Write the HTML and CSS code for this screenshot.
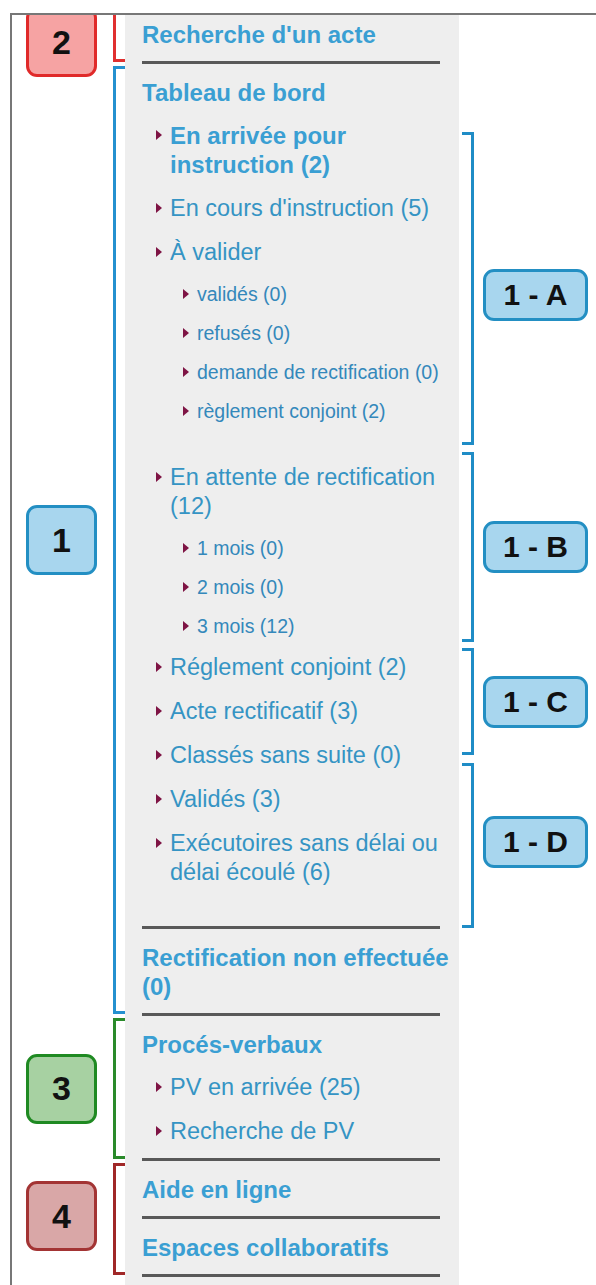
FILE: index.html
```html
<!DOCTYPE html>
<html lang="fr">
<head>
    <meta charset="UTF-8">
    <title>Menu - zones</title>
    <link rel="stylesheet" href="styles.css">
</head>
<body>

<div class="frame">

    <!-- zone 2 : recherche -->
    <div class="section sec-2">
        <div class="tag"><span class="badge badge-red">2</span></div>
        <div class="bracket bracket-red"></div>
        <div class="panel">
            <a class="head" href="#">Recherche d'un acte</a>
            <hr class="sep">
        </div>
    </div>

    <!-- zone 1 : tableau de bord -->
    <div class="section sec-1">
        <div class="tag"><span class="badge badge-blue">1</span></div>
        <div class="bracket bracket-blue"></div>
        <div class="panel">
            <a class="head" href="#">Tableau de bord</a>
            <ul class="menu menu-main">
                <li class="active"><a href="#">En arrivée pour instruction (2)</a></li>
                <li><a href="#">En cours d'instruction (5)</a></li>
                <li><a href="#">À valider</a>
                    <ul class="submenu">
                        <li><a href="#">validés (0)</a></li>
                        <li><a href="#">refusés (0)</a></li>
                        <li><a href="#">demande de rectification (0)</a></li>
                        <li><a href="#">règlement conjoint (2)</a></li>
                    </ul>
                </li>
                <li class="spaced"><a href="#">En attente de rectification (12)</a>
                    <ul class="submenu">
                        <li><a href="#">1 mois (0)</a></li>
                        <li><a href="#">2 mois (0)</a></li>
                        <li><a href="#">3 mois (12)</a></li>
                    </ul>
                </li>
                <li><a href="#">Réglement conjoint (2)</a></li>
                <li><a href="#">Acte rectificatif (3)</a></li>
                <li><a href="#">Classés sans suite (0)</a></li>
                <li><a href="#">Validés (3)</a></li>
                <li><a href="#">Exécutoires sans délai ou délai écoulé (6)</a></li>
            </ul>
            <hr class="sep">
            <a class="head" href="#">Rectification non effectuée (0)</a>
            <hr class="sep">
        </div>
        <div class="notes">
            <div class="note note-a"><span class="rbracket"></span><span class="badge badge-wide">1 - A</span></div>
            <div class="note note-b"><span class="rbracket"></span><span class="badge badge-wide">1 - B</span></div>
            <div class="note note-c"><span class="rbracket"></span><span class="badge badge-wide">1 - C</span></div>
            <div class="note note-d"><span class="rbracket"></span><span class="badge badge-wide">1 - D</span></div>
        </div>
    </div>

    <!-- zone 3 : proces-verbaux -->
    <div class="section sec-3">
        <div class="tag"><span class="badge badge-green">3</span></div>
        <div class="bracket bracket-green"></div>
        <div class="panel">
            <a class="head" href="#">Procés-verbaux</a>
            <ul class="menu">
                <li><a href="#">PV en arrivée (25)</a></li>
                <li><a href="#">Recherche de PV</a></li>
            </ul>
            <hr class="sep">
        </div>
    </div>

    <!-- zone 4 : aide -->
    <div class="section sec-4">
        <div class="tag"><span class="badge badge-brown">4</span></div>
        <div class="bracket bracket-brown"></div>
        <div class="panel">
            <a class="head" href="#">Aide en ligne</a>
            <hr class="sep">
            <a class="head" href="#">Espaces collaboratifs</a>
            <hr class="sep">
        </div>
    </div>

    <div class="tail"></div>
</div>

</body>
</html>
```

FILE: styles.css
```css
body {
    margin: 0;
    background-color: #ffffff;
    font-family: 'Liberation Sans', Arial, Helvetica, sans-serif;
}
.frame {
    margin: 13px 0 0 10px;
    border-top: 2px solid #777;
    border-left: 2px solid #777;
    overflow: hidden;
}
.section {
    display: flex;
}
.tag {
    width: 101px;
    flex: none;
    display: flex;
    align-items: center;
}
.badge {
    display: flex;
    align-items: center;
    justify-content: center;
    box-sizing: border-box;
    border: 3px solid;
    border-radius: 11px;
    font-weight: bold;
    color: #111;
}
.tag .badge {
    width: 71px;
    height: 70px;
    margin-left: 14px;
    font-size: 34px;
}
.sec-2 .tag {
    align-items: flex-start;
}
.sec-2 .tag .badge {
    margin-top: -8px;
    margin-bottom: -14px;
}
.sec-4 .tag .badge {
    margin-bottom: 6px;
}
.badge-red {
    background-color: #f6a3a3;
    border-color: #e02a2a;
}
.badge-blue {
    background-color: #a8d6ee;
    border-color: #238fc3;
}
.badge-green {
    background-color: #a7d1a2;
    border-color: #1f8a22;
}
.badge-brown {
    background-color: #d9a7a7;
    border-color: #a33434;
}
.bracket {
    width: 9px;
    flex: none;
    border: 3px solid;
    border-right: none;
    margin: 2px 0;
}
.bracket-red {
    border-color: #e03030;
}
.sec-2 .bracket {
    margin-top: -6px;
}
.bracket-blue {
    border-color: #2490cf;
}
.bracket-green {
    border-color: #2a8a2a;
}
.bracket-brown {
    border-color: #a02828;
}
.panel {
    width: 334px;
    flex: none;
    box-sizing: border-box;
    padding: 0 4px 0 17px;
    background-color: #eeeeee;
}
.head {
    display: block;
    padding: 14px 0 12px;
    font-size: 24px;
    line-height: 29px;
    font-weight: bold;
    color: #3a9fd3;
    text-decoration: none;
}
.sec-2 .head {
    padding-top: 5px;
}
.sep {
    height: 3px;
    margin: 0 15px 0 0;
    border: none;
    background-color: #585858;
}
.menu {
    list-style: none;
    margin: 2px 0 12px;
    padding-left: 14px;
}
.menu-main {
    margin-bottom: 39px;
}
.menu li + li {
    margin-top: 15px;
}
.menu li.spaced {
    margin-top: 40px;
}
.menu a {
    display: flex;
    font-size: 23.5px;
    line-height: 29px;
    color: #3594c4;
    text-decoration: none;
}
.menu a::before {
    content: "";
    flex: none;
    height: 0;
    margin: 9px 8px 0 0;
    border-left: 6px solid #7e1444;
    border-top: 5px solid transparent;
    border-bottom: 5px solid transparent;
}
.menu .active > a {
    font-size: 24px;
    font-weight: bold;
    color: #3a9fd3;
}
.submenu {
    list-style: none;
    margin: 15px 0 0;
    padding-left: 27px;
}
.submenu a {
    font-size: 19.5px;
    line-height: 24px;
    color: #3488bb;
}
.submenu a::before {
    margin-top: 7px;
}
.notes {
    padding-top: 68px;
}
.note {
    display: flex;
    align-items: center;
}
.note-a {
    height: 313px;
}
.note-a .badge {
    margin-top: 12px;
}
.note-b {
    height: 190px;
    margin-top: 7px;
}
.note-c {
    height: 107px;
    margin-top: 6px;
}
.note-d {
    height: 165px;
    margin-top: 8px;
}
.note-d .badge {
    margin-bottom: 8px;
}
.rbracket {
    align-self: stretch;
    width: 9px;
    margin-left: 3px;
    border: 3px solid #1f8cc6;
    border-left: none;
}
.badge-wide {
    width: 105px;
    height: 52px;
    margin-left: 9px;
    font-size: 30px;
    background-color: #a8d6ee;
    border-color: #238fc3;
}
.tail {
    width: 334px;
    height: 12px;
    margin-left: 113px;
    background-color: #eeeeee;
}
```
